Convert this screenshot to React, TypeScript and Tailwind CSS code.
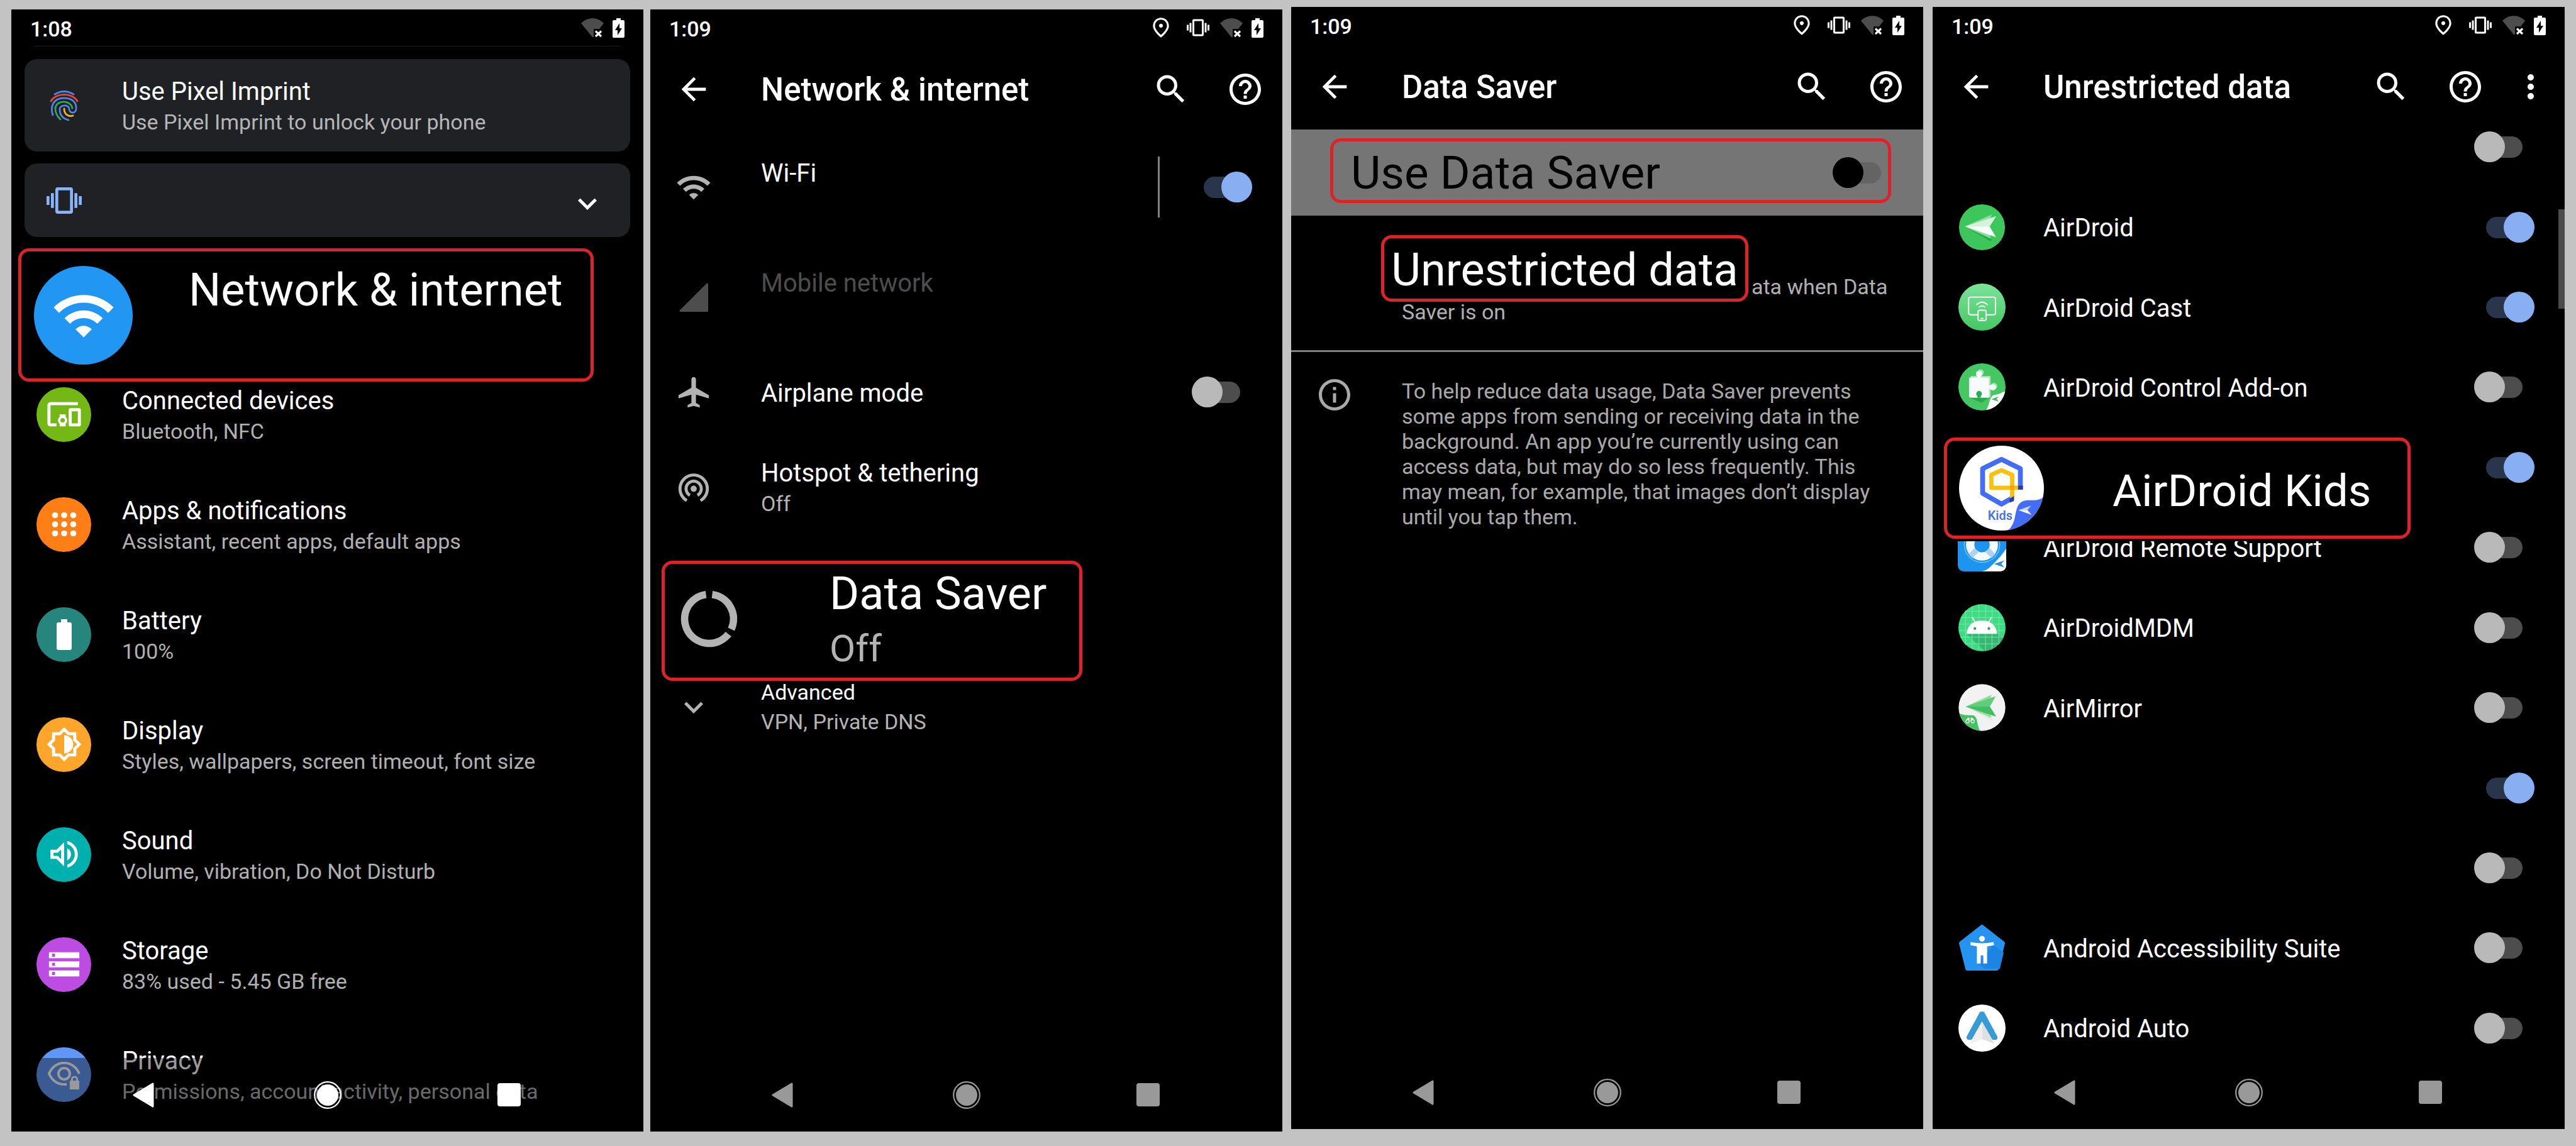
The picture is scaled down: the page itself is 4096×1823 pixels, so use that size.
import type { ReactNode } from "react";
import clsx from "clsx";
import {
  MdAirplanemodeActive,
  MdArrowBack,
  MdDevicesOther,
  MdExpandMore,
  MdHelpOutline,
  MdInfoOutline,
  MdMoreVert,
  MdOutlineBrightnessMedium,
  MdOutlinePlace,
  MdOutlineVolumeUp,
  MdSearch,
  MdStorage,
  MdVibration,
  MdWifi,
  MdWifiTethering,
} from "react-icons/md";

/* ---------- Status bar, header, navigation ---------- */

function WifiOffIcon() {
  return (
    <svg viewBox="0 0 36 30" className="h-[30px] w-[36px]" fill="none">
      <path d="M18 30 0 8C10 -2.500 26 -2.500 36 8L29 17H20V30Z" fill="#4d4d4d" />
      <path d="M23 20.500l9 8.500M32 20.500l-9 8.500" stroke="#fff" strokeWidth="3.200" />
    </svg>
  );
}

function BatteryChargingIcon() {
  return (
    <svg viewBox="0 0 19 31" className="h-[31px] w-[19px]">
      <path
        fillRule="evenodd"
        fill="#fff"
        d="M6 0h7v3h4a2 2 0 0 1 2 2v24a2 2 0 0 1-2 2H2a2 2 0 0 1-2-2V5a2 2 0 0 1 2-2h4ZM11 8 4 19h4v8l7-11h-4Z"
      />
    </svg>
  );
}

function StatusBar({ time, full = true }: { time: string; full?: boolean }) {
  return (
    <div className="flex h-[58px] shrink-0 items-center justify-between px-[30px] text-white">
      <span className="pt-[4px] text-[34px] font-medium">{time}</span>
      <div className="flex items-center">
        {full && (
          <>
            <MdOutlinePlace className="mr-[22px] size-[38px]" />
            <MdVibration className="mr-[17px] size-[36px]" />
          </>
        )}
        <WifiOffIcon />
        <span className="ml-[14px]">
          <BatteryChargingIcon />
        </span>
      </div>
    </div>
  );
}

function Header({ title, menu = false }: { title: string; menu?: boolean }) {
  return (
    <header className={clsx("flex h-[137px] shrink-0 items-center text-white", menu && "pr-[10px]")}>
      <button type="button" aria-label="Back" className="flex w-[138px] justify-center">
        <MdArrowBack className="size-[58px]" />
      </button>
      <h1 className="ml-[38px] flex-1 pt-[4px] text-[51px] font-medium">{title}</h1>
      <button type="button" aria-label="Search" className="flex w-[118px] justify-center">
        <MdSearch className="size-[60px]" />
      </button>
      <button type="button" aria-label="Help" className="flex w-[118px] justify-center">
        <MdHelpOutline className="size-[60px]" />
      </button>
      {menu && (
        <button type="button" aria-label="More options" className="flex w-[89px] justify-center">
          <MdMoreVert className="size-[60px]" />
        </button>
      )}
    </header>
  );
}

function NavBar({ className }: { className?: string }) {
  return (
    <nav className={clsx("flex h-[117px] shrink-0 items-center justify-center", className)}>
      <button type="button" aria-label="Back" className="flex w-[289px] justify-center pr-[8px]">
        <svg viewBox="0 0 36 40" className="h-[40px] w-[36px]">
          <path d="M33 2v36L3 20Z" fill="currentColor" stroke="currentColor" strokeWidth="3" strokeLinejoin="round" />
        </svg>
      </button>
      <button type="button" aria-label="Home" className="flex w-[289px] justify-center">
        <svg viewBox="0 0 44 44" className="size-[44px]">
          <circle cx="22" cy="22" r="20.800" fill="none" stroke="currentColor" strokeWidth="2.200" />
          <circle cx="22" cy="22" r="17" fill="currentColor" />
        </svg>
      </button>
      <button type="button" aria-label="Recent apps" className="flex w-[289px] justify-center">
        <span className="size-[37px] rounded-[4px] bg-current" />
      </button>
    </nav>
  );
}

function Toggle({ on = false, dark = false, label }: { on?: boolean; dark?: boolean; label: string }) {
  return (
    <input
      type="checkbox"
      role="switch"
      aria-label={label}
      defaultChecked={on}
      className={clsx(
        "relative mr-[48px] h-[49px] w-[96px] shrink-0 appearance-none before:absolute before:left-[19px] before:top-[8px] before:h-[34px] before:w-[58px] before:rounded-full after:absolute after:left-0 after:top-0 after:size-[49px] after:rounded-full checked:before:bg-[#29354a] checked:after:left-[47px] checked:after:bg-[#87aff2]",
        dark ? "before:bg-[#646464] after:bg-black" : "before:bg-[#4d4d4d] after:bg-[#b9b9b9]",
      )}
    />
  );
}

function Phone({ className, children }: { className?: string; children: ReactNode }) {
  return (
    <section className={clsx("relative flex min-h-[1785px] flex-1 flex-col overflow-hidden bg-black", className)}>
      {children}
    </section>
  );
}

/* ---------- Settings home ---------- */

function FingerprintIcon() {
  return (
    <svg viewBox="0 0 46 50" className="h-[50px] w-[46px]" fill="none" strokeWidth="2.800" strokeLinecap="round">
      <path d="M8 7Q23-2 38 7" stroke="#4e86e8" />
      <path d="M2 18C10 4 36 4 44 18" stroke="#e04a3a" />
      <path
        d="M5 40C1 28 4 13 23 13C38 13 43 22 42 31C41 38 31 38 31 30C31 23 16 23 16 31C16 41 22 46 30 48"
        stroke="#4e86e8"
      />
      <path d="M17 47C8 38 9 31 9 29C11 15 34 16 36 29" stroke="#33a853" />
      <path d="M23 30C23 39 30 43 37 41" stroke="#fabb05" />
    </svg>
  );
}

function AppsIcon() {
  return (
    <svg viewBox="0 0 24 24" className="size-[58px]" fill="currentColor">
      {[6, 12, 18].map((y) => [6, 12, 18].map((x) => <circle key={`${x}-${y}`} cx={x} cy={y} r="2" />))}
    </svg>
  );
}

function BatteryIcon() {
  return (
    <svg viewBox="0 0 24 49" className="h-[49px] w-[24px]" fill="currentColor">
      <path d="M7 0h10v5h4a3 3 0 0 1 3 3v38a3 3 0 0 1-3 3H3a3 3 0 0 1-3-3V8a3 3 0 0 1 3-3h4Z" />
    </svg>
  );
}

function PrivacyIcon() {
  return (
    <svg viewBox="0 0 54 46" className="mt-[6px] h-[46px] w-[54px]" fill="none" stroke="currentColor" strokeWidth="4">
      <path d="M51 19C42-4 12-4 3 19C8 30 17 37 31 36" />
      <circle cx="27" cy="19" r="9" />
      <path d="M36 30h15v14H36Z" fill="currentColor" stroke="none" />
      <path d="M39.500 31v-3a4 4 0 0 1 8 0v3" strokeWidth="3" />
    </svg>
  );
}

const settings = [
  { title: "Connected devices", summary: "Bluetooth, NFC", color: "bg-[#74b816]", icon: <MdDevicesOther className="size-[58px]" /> },
  { title: "Apps & notifications", summary: "Assistant, recent apps, default apps", color: "bg-[#ff7f16]", icon: <AppsIcon /> },
  { title: "Battery", summary: "100%", color: "bg-[#26857d]", icon: <BatteryIcon /> },
  { title: "Display", summary: "Styles, wallpapers, screen timeout, font size", color: "bg-[#fea62b]", icon: <MdOutlineBrightnessMedium className="size-[58px]" /> },
  { title: "Sound", summary: "Volume, vibration, Do Not Disturb", color: "bg-[#00b0ae]", icon: <MdOutlineVolumeUp className="size-[58px]" /> },
  { title: "Storage", summary: "83% used - 5.45 GB free", color: "bg-[#bd4ce3]", icon: <MdStorage className="size-[58px]" /> },
  { title: "Privacy", summary: "Permissions, account activity, personal data", color: "bg-[#6097f6]", icon: <PrivacyIcon /> },
];

function SettingsHome() {
  return (
    <Phone className="mt-[15px]">
      <StatusBar time="1:08" full={false} />
      <hr className="mx-[36px] border-[#1c1c1c]" />

      <div className="mx-[21px] mt-[20px] flex h-[147px] shrink-0 items-center rounded-[20px] bg-[#202125]">
        <span className="flex w-[125px] justify-center">
          <FingerprintIcon />
        </span>
        <div className="ml-[30px] pt-[5px] leading-[49px]">
          <h2 className="text-[40px] text-white">Use Pixel Imprint</h2>
          <p className="text-[34px] text-[#b4b5b6]">Use Pixel Imprint to unlock your phone</p>
        </div>
      </div>

      <button
        type="button"
        aria-label="Ringer"
        className="mx-[21px] mt-[19px] flex h-[117px] shrink-0 items-center justify-between rounded-[20px] bg-[#202125]"
      >
        <span className="flex w-[125px] justify-center">
          <MdVibration className="size-[56px] text-[#8ab4f8]" />
        </span>
        <MdExpandMore className="mr-[38px] mt-[10px] size-[60px] text-white" />
      </button>

      <div className="mr-[79px] ml-[11px] mt-[18px] flex h-[212px] shrink-0 rounded-[17px] border-[5px] border-[#dc2329] pl-[20px]">
        <span className="mt-[23px] flex size-[157px] items-center justify-center rounded-full bg-[#2296f3] text-white">
          <MdWifi className="size-[104px]" />
        </span>
        <h2 className="mt-[22px] ml-[89px] text-[72px] leading-[80px] text-white">Network & internet</h2>
      </div>

      <ul className="mt-[2px] flex flex-col gap-[75px]">
        {settings.map(({ title, summary, color, icon }) => (
          <li key={title} className="flex h-[100px] items-center">
            <span className="flex w-[167px] justify-center">
              <span className={clsx("flex size-[87px] items-center justify-center rounded-full text-white", color)}>{icon}</span>
            </span>
            <div className="ml-[9px] pt-[5px] leading-[49px]">
              <h2 className="text-[40px] text-white">{title}</h2>
              <p className="text-[34px] text-[#b0b0b0]">{summary}</p>
            </div>
          </li>
        ))}
      </ul>

      <NavBar className="absolute inset-x-0 bottom-0 bg-black/40 text-white" />
    </Phone>
  );
}

/* ---------- Network & internet ---------- */

function SignalIcon() {
  return (
    <svg viewBox="0 0 46 46" className="size-[46px]">
      <path d="M44.500 2v42.500H2Z" fill="currentColor" stroke="currentColor" strokeWidth="3" strokeLinejoin="round" />
    </svg>
  );
}

function DataUsageIcon() {
  return (
    <svg viewBox="0 0 24 24" className="size-[107px]" fill="none" stroke="currentColor" strokeWidth="2.600">
      <path d="M13.100 3.320A8.750 8.750 0 0 1 19.900 15.700" />
      <path d="M18.900 17.400A8.750 8.750 0 1 1 10.900 3.320" />
    </svg>
  );
}

function NetworkRow({ icon, title, summary, children, className }: {
  icon: ReactNode;
  title: string;
  summary?: string;
  children?: ReactNode;
  className?: string;
}) {
  return (
    <li className={clsx("flex h-[175px] items-center", className ?? "text-[#b3b3b3]")}>
      <span className="flex w-[138px] justify-center">{icon}</span>
      <div className="ml-[38px] h-[100px] flex-1 pt-[3px] leading-[49px]">
        <h2 className={clsx("text-[40px]", !className && "text-white")}>{title}</h2>
        {summary && <p className="text-[34px]">{summary}</p>}
      </div>
      {children}
    </li>
  );
}

function NetworkScreen() {
  return (
    <Phone className="ml-[11px] mt-[15px]">
      <StatusBar time="1:09" />
      <Header title="Network & internet" />
      <ul>
        <NetworkRow icon={<MdWifi className="size-[58px]" />} title="Wi-Fi">
          <span className="mr-[51px] h-[97px] w-[3px] bg-[#808080]" />
          <Toggle label="Wi-Fi" on />
        </NetworkRow>
        <NetworkRow icon={<SignalIcon />} title="Mobile network" className="text-[#4d4d4d]" />
        <li className="flex h-[127px] items-center text-[#b3b3b3]">
          <span className="flex w-[138px] justify-center">
            <MdAirplanemodeActive className="size-[58px]" />
          </span>
          <h2 className="ml-[38px] flex-1 pt-[4px] text-[40px] text-white">Airplane mode</h2>
          <Toggle label="Airplane mode" />
        </li>
        <NetworkRow icon={<MdWifiTethering className="size-[58px]" />} title="Hotspot & tethering" summary="Off" />
      </ul>

      <div className="mr-[318px] ml-[18px] mt-[30px] flex h-[191px] rounded-[17px] border-[5px] border-[#dc2329] text-[#b3b3b3]">
        <span className="flex w-[140px] items-center justify-center pb-[6px]">
          <DataUsageIcon />
        </span>
        <div className="ml-[122px] pt-[8px] leading-[80px]">
          <h2 className="text-[72px] text-white">Data Saver</h2>
          <p className="mt-[7px] text-[60px]">Off</p>
        </div>
      </div>

      <button type="button" className="flex items-center text-left text-[34px] leading-[36px] text-[#b3b3b3]">
        <span className="flex w-[138px] justify-center">
          <MdExpandMore className="size-[60px]" />
        </span>
        <span className="ml-[38px] flex flex-col gap-[11px]">
          <span className="text-white">Advanced</span>
          <span>VPN, Private DNS</span>
        </span>
      </button>

      <NavBar className="mt-auto text-[#999]" />
    </Phone>
  );
}

/* ---------- Data Saver ---------- */

function DataSaverScreen() {
  return (
    <Phone className="ml-[14px] mt-[11px]">
      <StatusBar time="1:09" />
      <Header title="Data Saver" />

      <label className="relative flex h-[137px] items-center justify-between bg-[#757575] pl-[95px]">
        <span className="text-[73px] leading-[80px] text-black">Use Data Saver</span>
        <Toggle label="Use Data Saver" dark />
        <span className="pointer-events-none absolute top-[14px] right-[51px] bottom-[20px] left-[62px] rounded-[17px] border-[5px] border-[#dc2329]" />
      </label>

      <div className="mt-[31px] border-b-[3px] border-[#808080] pb-[45px] text-[34px] text-[#b0b0b0]">
        <div className="ml-[143px] flex items-end">
          <h2 className="flex h-[106px] w-[584px] shrink-0 items-center justify-center rounded-[17px] border-[5px] border-[#dc2329] pt-[5px] text-[72px] text-white">
            Unrestricted data
          </h2>
          <span className="mb-[4px] ml-[5px] leading-[40px]">ata when Data</span>
        </div>
        <p className="ml-[176px] leading-[32px]">Saver is on</p>
      </div>

      <div className="mt-[38px] flex items-start text-[#a9a9a9]">
        <span className="flex w-[138px] justify-center">
          <MdInfoOutline className="size-[60px]" />
        </span>
        <p className="ml-[38px] w-[770px] pt-[4px] text-[34px] leading-[40px]">
          To help reduce data usage, Data Saver prevents some apps from sending or receiving data in the background. An
          app you’re currently using can access data, but may do so less frequently. This may mean, for example, that
          images don’t display until you tap them.
        </p>
      </div>

      <NavBar className="mt-auto text-[#999]" />
    </Phone>
  );
}

/* ---------- Unrestricted data ---------- */

function AirDroidIcon() {
  return (
    <svg viewBox="0 0 240 240" className="size-[75px]">
      <circle cx="120" cy="120" r="117" fill="#3cc65c" />
      <path d="M40 122 170 182 165 192Z" fill="#2ba74a" />
      <path d="M33 116 169 55 150 116 165 177Z" fill="#8fdd9f" />
      <path d="M33 116 193 63 159 116Z" fill="#d5f3db" />
      <path d="M33 116H159L191 170Z" fill="#fff" />
    </svg>
  );
}

function CastIcon() {
  return (
    <svg viewBox="0 0 240 240" className="size-[75px]" fill="none" stroke="#fff" strokeWidth="6">
      <defs>
        <linearGradient id="cast" x1="0" x2="0" y1="0" y2="1">
          <stop stopColor="#7be39a" />
          <stop offset="1" stopColor="#45c764" />
        </linearGradient>
      </defs>
      <circle cx="120" cy="120" r="120" fill="url(#cast)" stroke="none" />
      <path d="M98 159H62a10 10 0 0 1-10-10V79a10 10 0 0 1 10-10H179a10 10 0 0 1 10 10v70a10 10 0 0 1-10 10H143" />
      <path d="M91 109Q120 82 149 109M104 121Q120 107 136 121" />
      <rect x="100" y="136" width="41" height="52" rx="8" />
      <path d="M113 178h14" />
    </svg>
  );
}

function AddOnIcon() {
  return (
    <svg viewBox="0 0 240 240" className="size-[75px]">
      <defs>
        <clipPath id="addon">
          <circle cx="120" cy="120" r="120" />
        </clipPath>
      </defs>
      <g clipPath="url(#addon)">
        <rect width="240" height="240" fill="#45c764" />
        <path d="M54 174 118 200 156 174Z" fill="#2aa84c" />
        <g fill="#a7e3b5">
          <circle cx="113" cy="46" r="16" />
          <circle cx="181" cy="116" r="17" />
          <rect x="62" y="64" width="102" height="110" rx="5" />
        </g>
        <g fill="#f7fbfe">
          <circle cx="105" cy="54" r="16" />
          <circle cx="175" cy="122" r="16" />
          <rect x="96" y="62" width="18" height="16" />
          <rect x="150" y="113" width="16" height="18" />
          <rect x="54" y="72" width="102" height="102" rx="5" />
        </g>
        <circle cx="105" cy="155" r="14" fill="#1fae4c" />
        <rect x="97" y="160" width="16" height="15" fill="#1fae4c" />
        <path d="M240 142C215 148 210 158 185 160C155 166 163 205 140 240H240Z" fill="#fff" />
        <path d="M168 182 206 168 194 181 204 195Z" fill="#49b463" />
      </g>
    </svg>
  );
}

function KidsIcon() {
  return (
    <svg viewBox="0 0 436 436" className="size-[135px]" fill="none">
      <defs>
        <clipPath id="kids">
          <circle cx="218" cy="218" r="218" />
        </clipPath>
      </defs>
      <g clipPath="url(#kids)">
        <rect width="436" height="436" fill="#fff" />
        <path d="M315 226V118L218 70 121 118V244L218 300 278 266" stroke="#436df5" strokeWidth="25" strokeLinejoin="round" />
        <path d="M306 216H166V150L218 126 273 150V272" stroke="#fac20f" strokeWidth="22" strokeLinejoin="round" />
        <path d="M262 205h22v22h-22Z" fill="#f5a011" />
        <path d="M303 205h25v20h-25ZM260 272 282 258V284L260 292Z" fill="#2a3c9c" />
        <text x="148" y="380" fill="#4a72e0" fontFamily="Roboto, sans-serif" fontSize="64" fontWeight="600">
          Kids
        </text>
        <path d="M436 260C410 290 375 276 340 282C270 296 310 390 250 436H436Z" fill="#436df5" />
        <path d="M304 331 371 308 351 330Z" fill="#c9d6fb" />
        <path d="M304 331 351 330 373 355Z" fill="#fff" />
      </g>
    </svg>
  );
}

function RemoteSupportIcon() {
  return (
    <svg viewBox="0 0 246 246" className="size-[77px]" fill="none">
      <defs>
        <clipPath id="remote">
          <rect width="246" height="246" rx="30" />
        </clipPath>
      </defs>
      <g clipPath="url(#remote)">
        <rect width="246" height="246" fill="#1b95f0" />
        <circle cx="123" cy="110" r="90" stroke="#8cc6f5" strokeWidth="4" />
        <circle cx="123" cy="110" r="60" stroke="#f5fafe" strokeWidth="42" />
        <path d="M65 168 95 138M181 168 151 138M65 52 95 82M181 52 151 82" stroke="#afd1f3" strokeWidth="28" />
        <path d="M246 130C215 175 190 200 165 222C150 238 140 240 125 246H246Z" fill="#fff" />
        <path d="M184 208 237 190 221 208 237 226Z" fill="#2a8fdd" />
      </g>
    </svg>
  );
}

function MdmIcon() {
  return (
    <svg viewBox="0 0 240 240" className="size-[75px]" fill="none">
      <defs>
        <clipPath id="mdm">
          <circle cx="120" cy="120" r="120" />
        </clipPath>
      </defs>
      <g clipPath="url(#mdm)">
        <rect width="240" height="240" fill="#3edb85" />
        <path d="M42 151H196L240 180V240H135Z" fill="#37b872" />
        <path
          d="M36 0V240M70 0V240M104 0V240M138 0V240M171 0V240M206 0V240M0 36H240M0 68H240M0 102H240M0 135H240M0 168H240M0 202H240"
          stroke="#8deab5"
          strokeWidth="2.500"
        />
        <path d="M42 151C44 105 80 83 119 83C158 83 194 105 196 151Z" fill="#fff" />
        <path d="M70 66 86 94M168 66 153 94" stroke="#fff" strokeWidth="6" />
        <circle cx="84" cy="124" r="7" fill="#3a9d6b" />
        <circle cx="155" cy="124" r="7" fill="#3a9d6b" />
      </g>
    </svg>
  );
}

function AirMirrorIcon() {
  return (
    <svg viewBox="0 0 240 240" className="size-[75px]" fill="none">
      <defs>
        <clipPath id="mirror">
          <circle cx="120" cy="120" r="119" />
        </clipPath>
      </defs>
      <g clipPath="url(#mirror)">
        <rect width="240" height="240" fill="#f2f2f2" />
        <path d="M60 125 176 190 160 150Z" fill="#d9efde" />
        <path d="M37 115 169 54 150 115 168 172Z" fill="#93dca4" />
        <path d="M37 115 190 62 160 115Z" fill="#5fcd79" />
        <path d="M37 115H160L192 166Z" fill="#3fbf60" />
        <path d="M0 148C30 162 50 158 75 160C100 168 92 205 110 240H0Z" fill="#43c463" />
        <circle cx="46" cy="190" r="8" stroke="#fff" strokeWidth="4" />
        <circle cx="73" cy="190" r="8" stroke="#fff" strokeWidth="4" />
        <path d="M40 182 48 172H56V186H63V172H71L79 182H62V190H57V182Z" fill="#fff" />
      </g>
    </svg>
  );
}

function AccessibilityIcon() {
  return (
    <svg viewBox="0 0 72 72" className="size-[73px]">
      <path d="M36 3 69 29 59 69H13L3 29Z" fill="#2793f1" stroke="#2793f1" strokeWidth="6" strokeLinejoin="round" />
      <path d="M54 32 70 44 64 69H40L30 60Z" fill="#1d84e4" />
      <circle cx="36" cy="22" r="4.500" fill="#fff" />
      <path d="M18 27Q36 31 54 27L55 32 44 34V61H38V48H34V61H28V34L18 32Z" fill="#fff" />
    </svg>
  );
}

function AutoIcon() {
  return (
    <svg viewBox="0 0 75 75" className="size-[75px]">
      <circle cx="37.500" cy="37.500" r="37.500" fill="#fff" />
      <path d="M37.500 11Q34 11 33 14L13 51Q12 56 17 56H21L37.500 27 54 56H59Q63 56 62 51L42 14Q41 11 37.500 11Z" fill="#369bd6" />
      <path d="M37.500 27 57 62 37.500 55Z" fill="#e0e0e0" />
      <path d="M37.500 27 18 62 37.500 55Z" fill="#efefef" />
    </svg>
  );
}

type App = { name?: string; icon?: ReactNode; on?: boolean; callout?: boolean };

const apps: App[] = [
  {},
  { name: "AirDroid", icon: <AirDroidIcon />, on: true },
  { name: "AirDroid Cast", icon: <CastIcon />, on: true },
  { name: "AirDroid Control Add-on", icon: <AddOnIcon /> },
  { name: "AirDroid Kids", icon: <KidsIcon />, on: true, callout: true },
  { name: "AirDroid Remote Support", icon: <RemoteSupportIcon /> },
  { name: "AirDroidMDM", icon: <MdmIcon /> },
  { name: "AirMirror", icon: <AirMirrorIcon /> },
  { on: true },
  {},
  { name: "Android Accessibility Suite", icon: <AccessibilityIcon /> },
  { name: "Android Auto", icon: <AutoIcon /> },
];

function AppRow({ name, icon, on, callout }: App) {
  return (
    <li className="relative">
      <label className="flex h-full items-center">
        {callout ? (
          <span className="absolute top-[16px] right-[245px] left-[18px] z-10 flex h-[161px] items-center rounded-[17px] border-[5px] border-[#dc2329] bg-black pl-[19px] text-[71px] text-white shadow-[0_0_0_4px_#000]">
            {icon}
            <span className="ml-[109px] pt-[10px]">{name}</span>
          </span>
        ) : (
          <>
            <span className="flex w-[156px] justify-center">{icon}</span>
            <span className="ml-[20px] pt-[4px] text-[40px] text-white">{name}</span>
          </>
        )}
        <span className="ml-auto flex">
          <Toggle label={name ?? "App"} on={on} />
        </span>
      </label>
    </li>
  );
}

function UnrestrictedScreen() {
  return (
    <Phone className="ml-[15px] mt-[11px]">
      <StatusBar time="1:09" />
      <Header title="Unrestricted data" menu />
      {/* list is scrolled a little, so the first and last rows are cut */}
      <div className="relative flex-1 overflow-hidden">
        <ul className="-mt-[36px] -mb-[20px] grid h-[1529px] auto-rows-fr">
          {apps.map((app, i) => (
            <AppRow key={i} {...app} />
          ))}
        </ul>
        <span className="absolute top-[127px] right-0 h-[158px] w-[10px] bg-[#4b4b4b]" />
      </div>
      <NavBar className="text-[#999]" />
    </Phone>
  );
}

export default function App() {
  return (
    <main className="flex min-h-screen items-start bg-[#c3c3c3] px-[18px] font-['Roboto',sans-serif]">
      <SettingsHome />
      <NetworkScreen />
      <DataSaverScreen />
      <UnrestrictedScreen />
    </main>
  );
}
